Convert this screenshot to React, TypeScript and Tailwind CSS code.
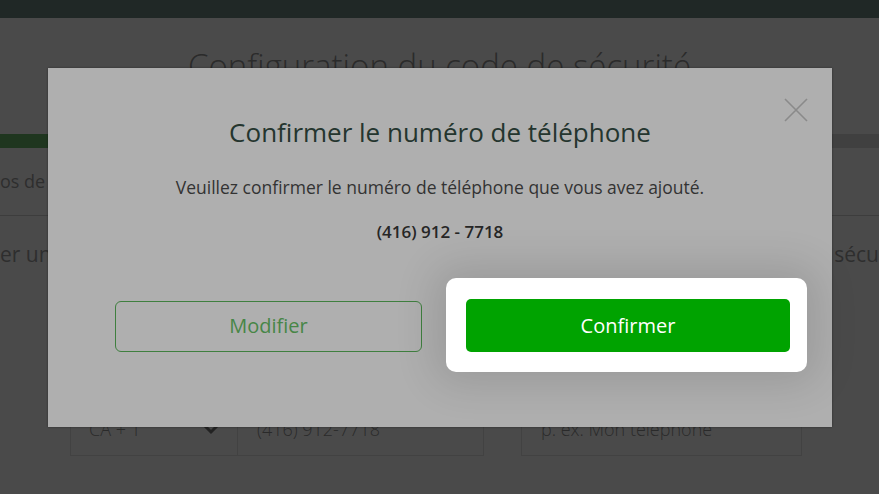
import React from 'react';

// Dimmed page behind the dialog, with the "Confirmer" button highlighted
function BackgroundPage() {
  return (
    <div className="flex flex-col">
      <div className="h-[18px] bg-[#202826]" />
      <div className="h-[116px] flex justify-center pt-[24px]">
        <h1 className="text-[33px] font-light leading-[48px] text-[#2b2b2b]">
          Configuration du code de sécurité
        </h1>
      </div>
      <div className="h-[14px] flex bg-[#404040]">
        <div className="w-[420px] bg-[#1f361f]" />
      </div>
      <div className="h-[68px] flex items-center border-b border-[#3d3d3d] text-[18px] text-[#2e2e2e]">
        <span>os de</span>
      </div>
      <div className="h-[78px] flex items-center justify-between text-[21px] text-[#2e2e2e]">
        <span>er un</span>
        <span>sécu</span>
      </div>
      <div className="flex items-center mt-[108px] pl-[70px] text-[18px] font-light text-[#2a2a2a]">
        <div className="w-[168px] h-[54px] border border-[#424242] flex items-center justify-between px-[18px]">
          <span>CA + 1</span>
          <svg width="16" height="12" viewBox="0 0 16 12" fill="none" stroke="#222" strokeWidth="3">
            <path d="M2 3l6 6 6-6" />
          </svg>
        </div>
        <div className="w-[246px] h-[54px] border border-l-0 border-[#424242] flex items-center px-[19px]">
          (416) 912-7718
        </div>
        <div className="ml-[37px] w-[281px] h-[54px] border border-[#424242] flex items-center px-[19px]">
          p. ex. Mon téléphone
        </div>
      </div>
    </div>
  );
}

function ConfirmDialog() {
  return (
    <div className="absolute left-[48px] top-[68px] w-[784px] h-[359px] bg-[#afafaf] shadow-[0_0_2px_rgba(0,0,0,0.4)] flex flex-col items-center pt-[47px]">
      <button className="absolute left-[736px] top-[30px] w-[24px] h-[24px]">
        <svg width="24" height="24" viewBox="0 0 24 24" fill="none" stroke="#8a8a8a" strokeWidth="1.6">
          <path d="M1 1l22 22M23 1L1 23" />
        </svg>
      </button>
      <h2 className="text-[26px] leading-[34px] text-[#24352e]">
        Confirmer le numéro de téléphone
      </h2>
      <p className="mt-[26px] text-[17.5px] leading-[24px] text-[#333]">
        Veuillez confirmer le numéro de téléphone que vous avez ajouté.
      </p>
      <p className="mt-[21px] text-[17px] leading-[24px] font-semibold text-[#262626]">
        (416) 912 - 7718
      </p>
      <div className="mt-[34px] w-full flex items-center pl-[67px]">
        <button className="w-[307px] h-[51px] mt-[2px] rounded-[6px] border border-[#3f7f3f] text-[20px] text-[#478647]">
          Modifier
        </button>
        <div className="ml-[24px] rounded-[10px] bg-white pt-[21px] pb-[20px] pl-[20px] pr-[17px] shadow-[0_0_40px_12px_rgba(0,0,0,0.12)]">
          <button className="w-[324px] h-[53px] rounded-[5px] bg-[#00a300] text-[20px] text-white">
            Confirmer
          </button>
        </div>
      </div>
    </div>
  );
}

export default function App() {
  return (
    <div
      className="relative w-[879px] h-[494px] overflow-hidden bg-[#4a4a4a]"
      style={{ fontFamily: '"Open Sans", "Noto Sans", sans-serif' }}
    >
      <BackgroundPage />
      <ConfirmDialog />
    </div>
  );
}
